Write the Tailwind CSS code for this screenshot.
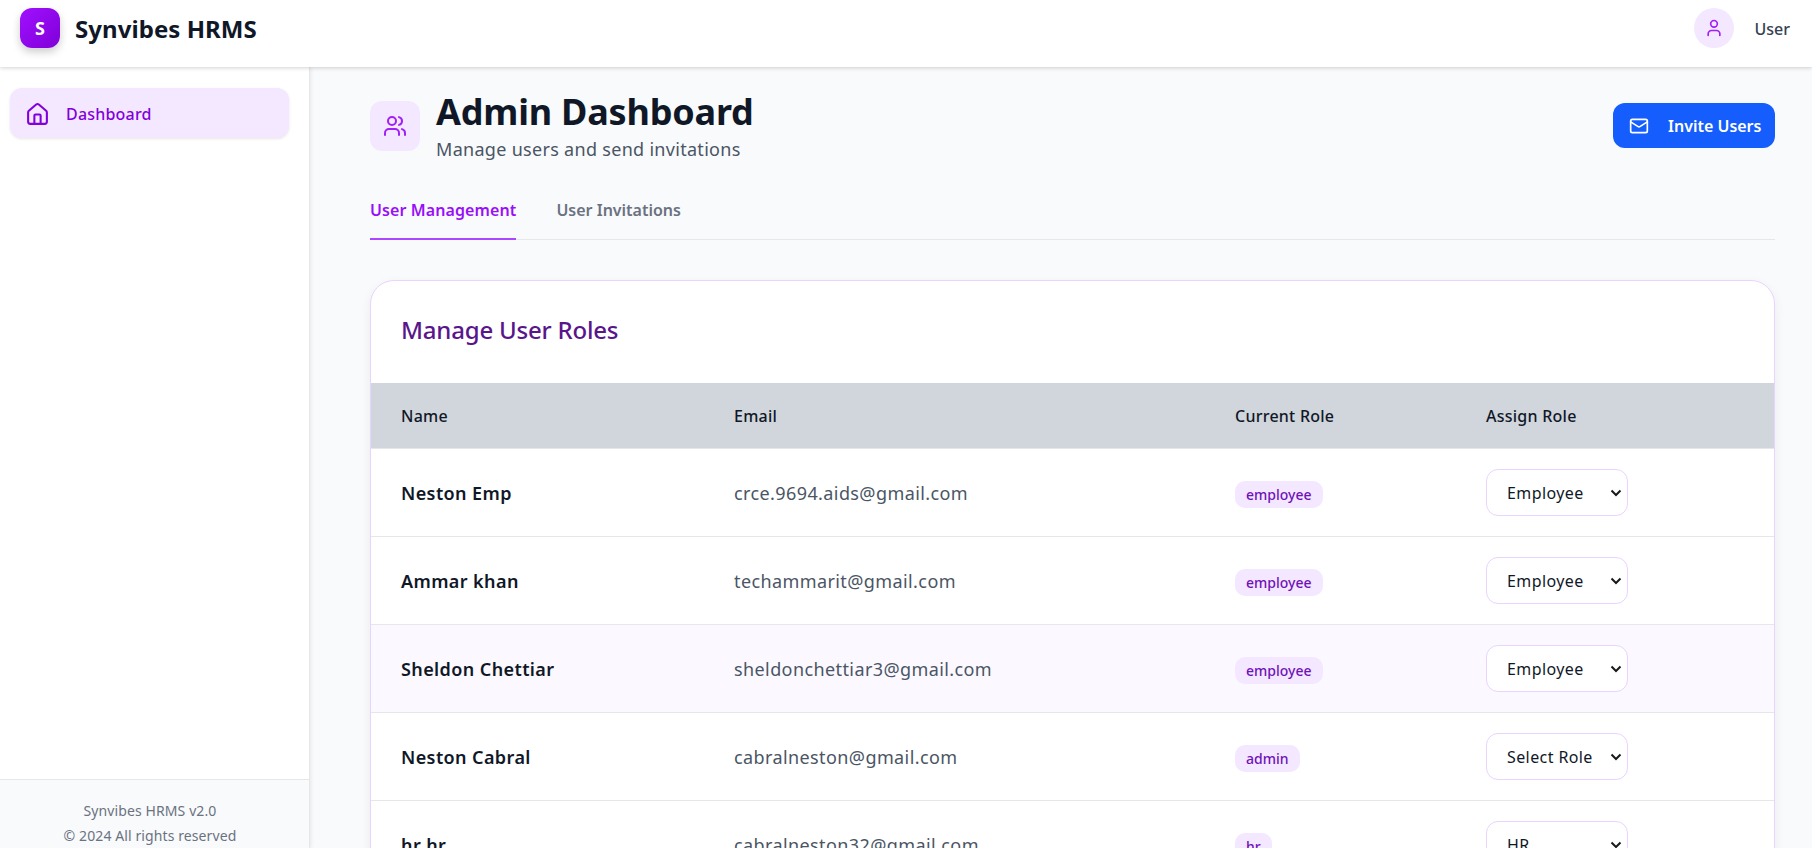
<!DOCTYPE html>
<html lang="en">
<head>
<meta charset="utf-8">
<title>Synvibes HRMS</title>
<script src="https://cdn.jsdelivr.net/npm/@tailwindcss/browser@4"></script>
</head>
<body class="h-screen overflow-hidden bg-[#f9fafb] font-['Noto_Sans',sans-serif] text-[#101828]">
<div class="flex h-[848px] flex-col overflow-hidden">
  <header class="relative z-20 flex h-[67px] shrink-0 items-start justify-between bg-white pl-5 pr-[22px] pt-2 shadow-[0_1px_4px_rgba(0,0,0,0.18)]">
    <div class="flex items-center gap-[15px]">
      <div class="flex h-10 w-10 items-center justify-center rounded-xl bg-gradient-to-br from-[#a010ff] to-[#8000d8] text-lg font-bold text-white shadow-[0_4px_8px_rgba(0,0,0,0.2)]">S</div>
      <span class="pt-[2px] text-[24px] font-bold tracking-[0.05px]">Synvibes HRMS</span>
    </div>
    <div class="flex items-center gap-5">
      <div class="flex h-10 w-10 items-center justify-center rounded-full bg-[#f3e8ff]">
        <svg class="h-5 w-5 text-[#a020f8]" viewBox="0 0 24 24" fill="none" stroke="currentColor" stroke-width="2" stroke-linecap="round" stroke-linejoin="round"><path d="M19 21v-2a4 4 0 0 0-4-4H9a4 4 0 0 0-4 4v2"/><circle cx="12" cy="7" r="4"/></svg>
      </div>
      <span class="pt-[2px] text-base font-medium text-[#364153]">User</span>
    </div>
  </header>
  <div class="flex min-h-0 flex-1">
    <aside class="relative z-10 flex w-[310px] shrink-0 flex-col border-r border-[#e5e7eb] bg-white shadow-[1px_0_4px_rgba(0,0,0,0.08)]">
      <nav class="flex-1 p-[10px] pt-[21px]">
        <a class="flex h-[50px] w-[279px] items-center gap-4 rounded-xl bg-[#f3e8ff] pl-[15px] pt-[2px] text-base font-medium tracking-[0.2px] text-[#8200db] shadow-[0_1px_3px_rgba(0,0,0,0.1)]">
          <svg class="h-[25px] w-[25px]" viewBox="0 0 24 24" fill="none" stroke="currentColor" stroke-width="2" stroke-linecap="round" stroke-linejoin="round"><path d="M15 21v-8a1 1 0 0 0-1-1h-4a1 1 0 0 0-1 1v8"/><path d="M3 10a2 2 0 0 1 .709-1.528l7-5.999a2 2 0 0 1 2.582 0l7 5.999A2 2 0 0 1 21 10v9a2 2 0 0 1-2 2H5a2 2 0 0 1-2-2z"/></svg>
          Dashboard
        </a>
      </nav>
      <div class="h-[69px] border-t border-[#e5e7eb] bg-[#f9fafb] pr-[9px] pt-[18px] text-center text-sm leading-[25px] tracking-[0.1px] text-[#6a7282]">
        <p>Synvibes HRMS v2.0</p>
        <p>© 2024 All rights reserved</p>
      </div>
    </aside>
    <main class="min-w-0 flex-1 overflow-hidden pl-[60px] pr-[37px]">
      <div class="flex h-[173px] flex-col">
        <div class="flex h-[132px] items-start justify-between pt-[34px]">
          <div class="flex items-start gap-4">
            <div class="flex h-[50px] w-[50px] items-center justify-center rounded-xl bg-[#f3e8ff]">
              <svg class="h-6 w-6 text-[#a020f8]" viewBox="0 0 24 24" fill="none" stroke="currentColor" stroke-width="2" stroke-linecap="round" stroke-linejoin="round"><path d="M16 21v-2a4 4 0 0 0-4-4H6a4 4 0 0 0-4 4v2"/><circle cx="9" cy="7" r="4"/><path d="M22 21v-2a4 4 0 0 0-3-3.87"/><path d="M16 3.13a4 4 0 0 1 0 7.75"/></svg>
            </div>
            <div class="-mt-[9px]">
              <h1 class="mb-1 text-[36px] font-bold leading-[40px] tracking-[-0.2px]">Admin Dashboard</h1>
              <p class="text-lg leading-[26px] tracking-[0.3px] text-[#4a5565]">Manage users and send invitations</p>
            </div>
          </div>
          <button class="mt-[2px] flex h-[45px] w-[162px] items-center rounded-xl bg-[#155dfc] pl-4 text-base font-semibold text-white">
            <svg class="mr-[19px] h-5 w-5" viewBox="0 0 24 24" fill="none" stroke="currentColor" stroke-width="2" stroke-linecap="round" stroke-linejoin="round"><rect x="2" y="4" width="20" height="16" rx="2"/><path d="m22 7-8.97 5.7a1.94 1.94 0 0 1-2.06 0L2 7"/></svg>
            Invite Users
          </button>
        </div>
        <div class="flex h-[41px] gap-10 border-b border-[#e5e7eb] text-base font-semibold leading-[22px]">
          <span class="h-[41px] border-b-2 border-[#ad46ff] tracking-[0.1px] text-[#9810fa]">User Management</span>
          <span class="text-[#6a7282]">User Invitations</span>
        </div>
      </div>
      <section class="mt-[40px] overflow-hidden rounded-3xl border border-[#e9d4ff] bg-white shadow-[0_4px_12px_rgba(0,0,0,0.06)]">
        <h2 class="flex h-[102px] items-center pb-1 pl-[30px] text-[24px] font-medium tracking-[-0.2px] text-[#59168b]">Manage User Roles</h2>
        <table class="w-full table-fixed border-collapse text-left">
          <colgroup><col class="w-[363px]"><col class="w-[501px]"><col class="w-[251px]"><col></colgroup>
          <thead class="bg-[#d1d5dc]">
            <tr class="h-[65px] border-b border-[#e5e7eb] text-base tracking-[0.25px]">
              <th class="pl-[30px] pt-[2px] font-medium">Name</th><th class="pt-[2px] font-medium">Email</th><th class="pt-[2px] font-medium">Current Role</th><th class="pt-[2px] font-medium">Assign Role</th>
            </tr>
          </thead>
          <tbody class="text-lg tracking-[0.4px]">
            <tr class="h-[88px] border-b border-[#e5e7eb]">
              <td class="pl-[30px] pt-[2px] font-semibold">Neston Emp</td><td class="pt-[2px] text-[#4a5565]">crce.9694.aids@gmail.com</td>
              <td class="pt-[2px]"><span class="inline-block rounded-[10px] bg-[#f3e8ff] px-[11px] py-[3px] text-sm font-medium leading-[21px] tracking-normal text-[#7012b8]">employee</span></td>
              <td><div class="relative inline-block align-middle"><select class="block h-[47px] w-[142px] appearance-none rounded-xl border border-[#e9d4ff] bg-white pl-5 pt-[2px] text-base"><option>Employee</option></select><svg class="pointer-events-none absolute right-[6px] top-[18px] h-3 w-3 text-[#1a1a1a]" viewBox="0 0 12 12" fill="none" stroke="currentColor" stroke-width="2"><path d="M1.5 3.5 6 8l4.5-4.5"/></svg></div></td>
            </tr>
            <tr class="h-[88px] border-b border-[#e5e7eb]">
              <td class="pl-[30px] pt-[2px] font-semibold">Ammar khan</td><td class="pt-[2px] text-[#4a5565]">techammarit@gmail.com</td>
              <td class="pt-[2px]"><span class="inline-block rounded-[10px] bg-[#f3e8ff] px-[11px] py-[3px] text-sm font-medium leading-[21px] tracking-normal text-[#7012b8]">employee</span></td>
              <td><div class="relative inline-block align-middle"><select class="block h-[47px] w-[142px] appearance-none rounded-xl border border-[#e9d4ff] bg-white pl-5 pt-[2px] text-base"><option>Employee</option></select><svg class="pointer-events-none absolute right-[6px] top-[18px] h-3 w-3 text-[#1a1a1a]" viewBox="0 0 12 12" fill="none" stroke="currentColor" stroke-width="2"><path d="M1.5 3.5 6 8l4.5-4.5"/></svg></div></td>
            </tr>
            <tr class="h-[88px] border-b border-[#e5e7eb] bg-[#fbf9ff]">
              <td class="pl-[30px] pt-[2px] font-semibold">Sheldon Chettiar</td><td class="pt-[2px] text-[#4a5565]">sheldonchettiar3@gmail.com</td>
              <td class="pt-[2px]"><span class="inline-block rounded-[10px] bg-[#f3e8ff] px-[11px] py-[3px] text-sm font-medium leading-[21px] tracking-normal text-[#7012b8]">employee</span></td>
              <td><div class="relative inline-block align-middle"><select class="block h-[47px] w-[142px] appearance-none rounded-xl border border-[#e9d4ff] bg-white pl-5 pt-[2px] text-base"><option>Employee</option></select><svg class="pointer-events-none absolute right-[6px] top-[18px] h-3 w-3 text-[#1a1a1a]" viewBox="0 0 12 12" fill="none" stroke="currentColor" stroke-width="2"><path d="M1.5 3.5 6 8l4.5-4.5"/></svg></div></td>
            </tr>
            <tr class="h-[88px] border-b border-[#e5e7eb]">
              <td class="pl-[30px] pt-[2px] font-semibold">Neston Cabral</td><td class="pt-[2px] text-[#4a5565]">cabralneston@gmail.com</td>
              <td class="pt-[2px]"><span class="inline-block rounded-[10px] bg-[#f3e8ff] px-[11px] py-[3px] text-sm font-medium leading-[21px] tracking-normal text-[#7012b8]">admin</span></td>
              <td><div class="relative inline-block align-middle"><select class="block h-[47px] w-[142px] appearance-none rounded-xl border border-[#e9d4ff] bg-white pl-5 pt-[2px] text-base"><option>Select Role</option></select><svg class="pointer-events-none absolute right-[6px] top-[18px] h-3 w-3 text-[#1a1a1a]" viewBox="0 0 12 12" fill="none" stroke="currentColor" stroke-width="2"><path d="M1.5 3.5 6 8l4.5-4.5"/></svg></div></td>
            </tr>
            <tr class="h-[88px] border-b border-[#e5e7eb]">
              <td class="pl-[30px] pt-[2px] font-semibold">hr hr</td><td class="pt-[2px] text-[#4a5565]">cabralneston32@gmail.com</td>
              <td class="pt-[2px]"><span class="inline-block rounded-[10px] bg-[#f3e8ff] px-[11px] py-[3px] text-sm font-medium leading-[21px] tracking-normal text-[#7012b8]">hr</span></td>
              <td><div class="relative inline-block align-middle"><select class="block h-[47px] w-[142px] appearance-none rounded-xl border border-[#e9d4ff] bg-white pl-5 pt-[2px] text-base"><option>HR</option></select><svg class="pointer-events-none absolute right-[6px] top-[18px] h-3 w-3 text-[#1a1a1a]" viewBox="0 0 12 12" fill="none" stroke="currentColor" stroke-width="2"><path d="M1.5 3.5 6 8l4.5-4.5"/></svg></div></td>
            </tr>
          </tbody>
        </table>
      </section>
    </main>
  </div>
</div>
</body>
</html>
